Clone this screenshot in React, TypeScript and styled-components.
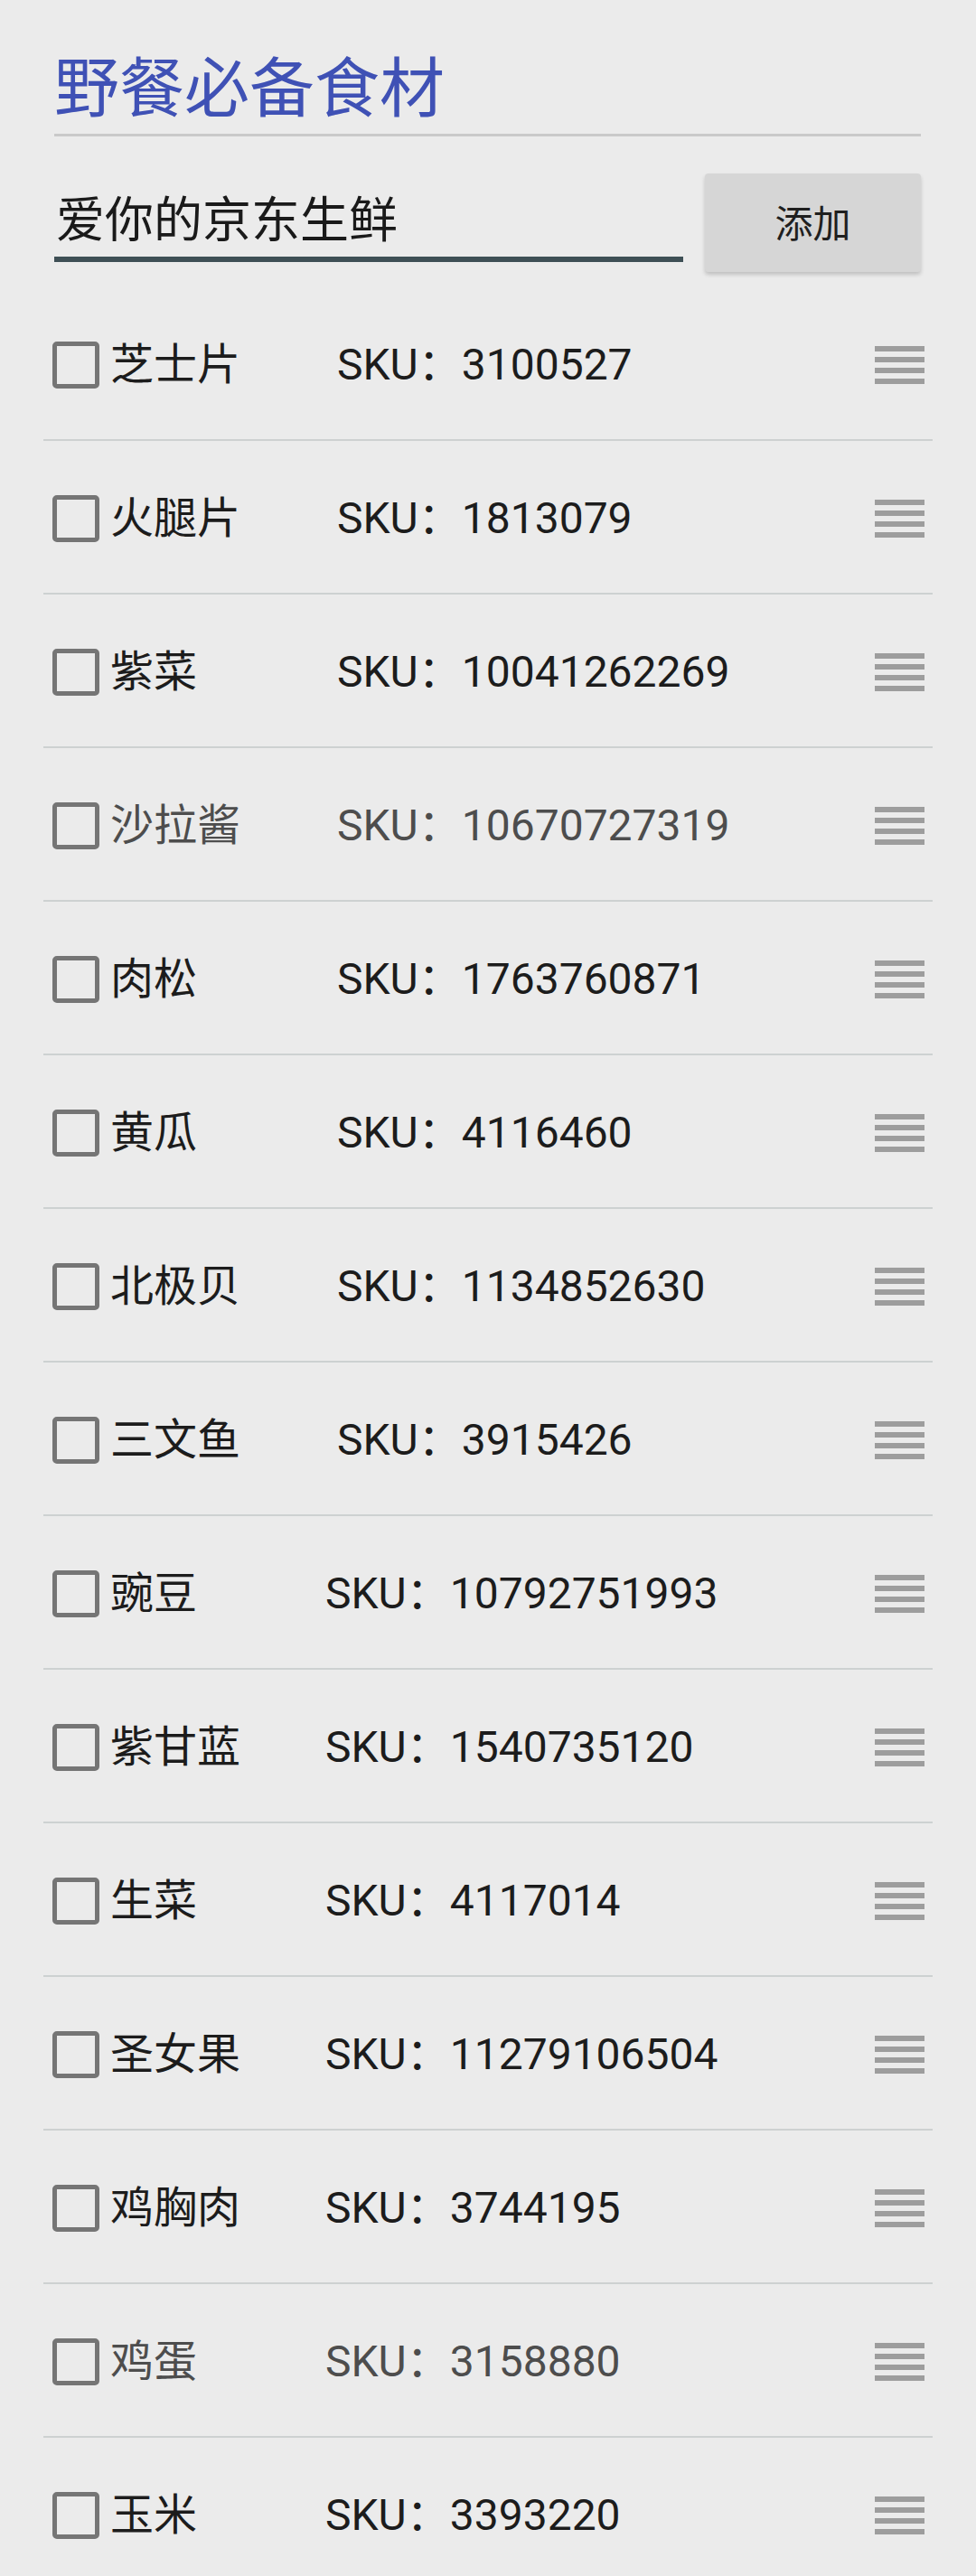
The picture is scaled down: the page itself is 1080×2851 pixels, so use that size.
import { useState } from 'react';
import styled, { createGlobalStyle } from 'styled-components';

interface Item {
  name: string;
  sku: string;
  muted?: boolean;
  narrow?: boolean;
}

const items: Item[] = [
  { name: '芝士片', sku: '3100527' },
  { name: '火腿片', sku: '1813079' },
  { name: '紫菜', sku: '10041262269' },
  { name: '沙拉酱', sku: '10670727319', muted: true },
  { name: '肉松', sku: '1763760871' },
  { name: '黄瓜', sku: '4116460' },
  { name: '北极贝', sku: '1134852630' },
  { name: '三文鱼', sku: '3915426' },
  { name: '豌豆', sku: '10792751993', narrow: true },
  { name: '紫甘蓝', sku: '1540735120', narrow: true },
  { name: '生菜', sku: '4117014', narrow: true },
  { name: '圣女果', sku: '11279106504', narrow: true },
  { name: '鸡胸肉', sku: '3744195', narrow: true },
  { name: '鸡蛋', sku: '3158880', muted: true, narrow: true },
  { name: '玉米', sku: '3393220', narrow: true },
];

const GlobalStyle = createGlobalStyle`
  html, body {
    margin: 0;
    padding: 0;
    background: #ebebeb;
  }
  body {
    font-family: Roboto, "Noto Sans CJK SC", sans-serif;
    color: #1c1c1c;
  }
`;

const Page = styled.div`
  padding: 0 48px;
  min-height: 100vh;
`;

const Header = styled.div`
  padding: 56px 13px 0 12px;
`;

const Title = styled.h1`
  margin: 0;
  font-family: "Noto Sans CJK SC", sans-serif;
  font-weight: 400;
  font-size: 72px;
  line-height: 72px;
  color: #3f51b5;
`;

const Rule = styled.div`
  margin-top: 20px;
  height: 3px;
  background: #c9c9c9;
`;

const AddRow = styled.div`
  display: flex;
  align-items: flex-start;
  gap: 24px;
  margin-top: 41px;
`;

const Field = styled.input`
  flex: 1;
  min-width: 0;
  margin-top: 20px;
  padding: 0 0 18px 2px;
  height: 54px;
  box-sizing: content-box;
  border: none;
  border-bottom: 6px solid #3e4f55;
  background: transparent;
  outline: none;
  font-family: "Noto Sans CJK SC", sans-serif;
  font-size: 54px;
  line-height: 54px;
  color: #1a1a1a;
`;

const AddButton = styled.button`
  width: 239px;
  height: 109px;
  flex-shrink: 0;
  border: none;
  border-radius: 4px;
  background: #d6d6d6;
  box-shadow: 0 3px 4px rgba(0, 0, 0, 0.18);
  font-family: "Noto Sans CJK SC", sans-serif;
  font-size: 42px;
  color: #1f1f1f;
  padding: 0 0 4px;
`;

const List = styled.ul`
  list-style: none;
  margin: 17px 0 0;
  padding: 0;
`;

const Row = styled.li`
  display: flex;
  align-items: center;
  box-sizing: border-box;
  height: 170px;
  padding-top: 4px;
  border-bottom: 2px solid #cdd1d1;
`;

const Box = styled.span<{ $checked: boolean }>`
  box-sizing: border-box;
  width: 52px;
  height: 52px;
  margin-left: 10px;
  flex-shrink: 0;
  border: 5px solid #757575;
  border-radius: 5px;
  background: ${(p) => (p.$checked ? '#757575' : 'transparent')};
  cursor: pointer;
`;

const Name = styled.span<{ $muted?: boolean; $narrow?: boolean }>`
  width: ${(p) => (p.$narrow ? '238px' : '251px')};
  margin-left: 12px;
  flex-shrink: 0;
  font-size: 48px;
  line-height: 60px;
  color: ${(p) => (p.$muted ? '#4d4d4d' : '#1c1c1c')};
`;

const Sku = styled.span<{ $muted?: boolean }>`
  font-size: 48px;
  line-height: 60px;
  color: ${(p) => (p.$muted ? '#4d4d4d' : '#1c1c1c')};
`;

const Handle = styled.span`
  margin-left: auto;
  margin-right: 9px;
  width: 55px;
  display: flex;
  flex-direction: column;
  gap: 6px;
`;

const Bar = styled.span`
  height: 6px;
  background: #9d9d9d;
`;

const App = () => {
  const [checked, setChecked] = useState<boolean[]>(items.map(() => false));

  const toggle = (i: number) => {
    setChecked((prev) => prev.map((c, j) => (j === i ? !c : c)));
  };

  return (
    <>
      <GlobalStyle />
      <Page>
        <Header>
          <Title>野餐必备食材</Title>
          <Rule />
          <AddRow>
            <Field defaultValue="爱你的京东生鲜" />
            <AddButton>添加</AddButton>
          </AddRow>
        </Header>
        <List>
          {items.map((item, i) => (
            <Row key={item.sku}>
              <Box $checked={checked[i]} onClick={() => toggle(i)} />
              <Name $muted={item.muted} $narrow={item.narrow}>{item.name}</Name>
              <Sku $muted={item.muted}>SKU：{item.sku}</Sku>
              <Handle>
                <Bar />
                <Bar />
                <Bar />
                <Bar />
              </Handle>
            </Row>
          ))}
        </List>
      </Page>
    </>
  );
};

export default App;
